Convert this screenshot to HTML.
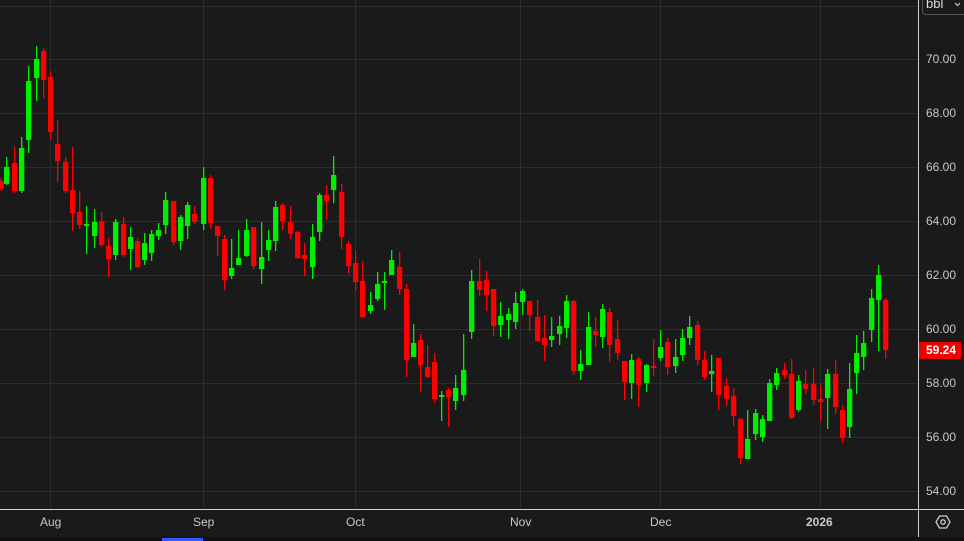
<!DOCTYPE html>
<html><head><meta charset="utf-8"><style>
html,body{margin:0;padding:0;background:#1a1a1a;width:964px;height:541px;overflow:hidden;font-family:"Liberation Sans",sans-serif}
.lbl{position:absolute;color:#c9c9c9;font-size:12px}
</style></head><body>
<svg id="c" width="964" height="541" style="position:absolute;left:0;top:0" xmlns="http://www.w3.org/2000/svg">
<rect width="964" height="541" fill="#1a1a1a"/>
<g stroke="#2d2d2d" stroke-width="1">
<line x1="0" y1="59.5" x2="918" y2="59.5"/><line x1="0" y1="113.5" x2="918" y2="113.5"/>
<line x1="0" y1="167.5" x2="918" y2="167.5"/><line x1="0" y1="221.5" x2="918" y2="221.5"/>
<line x1="0" y1="275.5" x2="918" y2="275.5"/><line x1="0" y1="329.5" x2="918" y2="329.5"/>
<line x1="0" y1="383.5" x2="918" y2="383.5"/><line x1="0" y1="437.5" x2="918" y2="437.5"/>
<line x1="0" y1="491.5" x2="918" y2="491.5"/><line x1="0" y1="6.5" x2="918" y2="6.5"/>
<line x1="50.5" y1="0" x2="50.5" y2="509"/><line x1="203.5" y1="0" x2="203.5" y2="509"/>
<line x1="355.5" y1="0" x2="355.5" y2="509"/><line x1="520.5" y1="0" x2="520.5" y2="509"/>
<line x1="660.5" y1="0" x2="660.5" y2="509"/><line x1="820.5" y1="0" x2="820.5" y2="509"/>
</g>
<g id="cs"></g>
<line x1="918.5" y1="0" x2="918.5" y2="537" stroke="#d0d0d0"/>
<line x1="0" y1="509.5" x2="964" y2="509.5" stroke="#d0d0d0"/>
<rect x="0" y="537" width="964" height="4" fill="#111"/>
<rect x="162" y="538" width="41" height="3" fill="#2a5cff"/>
<rect x="919" y="342" width="42" height="17" fill="#f20000"/>
<rect x="922.5" y="-3.5" width="45" height="18" rx="3" fill="none" stroke="#555"/>
<polygon points="939.5,516 946.5,516 950,522 946.5,528 939.5,528 936,522" fill="none" stroke="#ccc" stroke-width="1.3"/>
<circle cx="943" cy="522" r="2.2" fill="none" stroke="#ccc" stroke-width="1.3"/>
<polyline points="955,3 957.5,5.5 960,3" fill="none" stroke="#ccc" stroke-width="1.2"/>
</svg>
<div class="lbl" style="left:926px;top:-4px;color:#ddd;font-size:13px">bbl</div>
<div class="lbl" style="left:926px;top:52px">70.00</div>
<div class="lbl" style="left:926px;top:106px">68.00</div>
<div class="lbl" style="left:926px;top:160px">66.00</div>
<div class="lbl" style="left:926px;top:214px">64.00</div>
<div class="lbl" style="left:926px;top:268px">62.00</div>
<div class="lbl" style="left:926px;top:322px">60.00</div>
<div class="lbl" style="left:926px;top:376px">58.00</div>
<div class="lbl" style="left:926px;top:430px">56.00</div>
<div class="lbl" style="left:926px;top:484px">54.00</div>
<div class="lbl" style="left:926px;top:343px;color:#fff;font-weight:bold">59.24</div>
<div class="lbl" style="left:40px;top:515px">Aug</div>
<div class="lbl" style="left:193px;top:515px">Sep</div>
<div class="lbl" style="left:346px;top:515px">Oct</div>
<div class="lbl" style="left:510px;top:515px">Nov</div>
<div class="lbl" style="left:650px;top:515px">Dec</div>
<div class="lbl" style="left:806px;top:515px;font-weight:bold">2026</div>
<script>
var d=`R 1,178,191,181,189
G 6.5,157,185,167,184
R 14.5,147,193,163,191
G 21.5,137,193,148,191
G 28.5,66,153,81,140
G 36.5,46,101,59,78
R 43.5,48,98,51,80
R 50.5,71,139,77,132
R 57.5,120,182,144,161
R 65.5,157,193,162,191
R 72.5,147,231,190,213
R 79.5,191,229,212,225
G 86.5,206,254,224,226
G 94.5,209,248,222,236
R 101.5,212,247,221,245
R 108.5,238,277,246,259
G 115.5,219,260,222,255
R 123.5,217,257,224,255
G 130.5,227,270,237,249
R 137.5,238,268,241,267
G 144.5,233,265,243,260
G 151.5,230,261,234,253
G 158.5,223,240,230,236
G 165.5,192,234,200,225
R 173.5,201,245,201,242
G 180.5,215,250,217,241
G 187.5,202,239,205,226
R 194.5,206,224,214,222
G 203.5,167,230,178,224
R 210.5,175,229,178,223
R 217.5,226,256,226,236
R 224.5,235,290,239,280
G 231.5,239,279,268,276
G 238.5,230,265,258,265
G 246.5,219,257,230,256
R 253.5,227,269,227,266
G 261.5,222,284,257,269
G 268.5,230,261,240,250
G 275.5,201,251,207,241
R 282.5,203,230,205,221
R 290.5,206,239,222,234
R 297.5,231,259,232,258
R 304.5,243,276,255,259
G 312.5,224,279,237,267
G 319.5,193,241,195,232
R 326.5,185,220,195,201
G 333.5,156,203,175,190
R 341.5,184,249,192,237
R 348.5,241,274,244,266
R 355.5,251,291,263,282
R 362.5,261,318,281,317
G 370.5,292,314,305,311
G 377.5,272,301,284,299
G 384.5,272,310,281,283
G 391.5,250,275,260,275
R 399.5,252,295,267,289
R 406.5,284,377,289,360
G 413.5,324,357,343,357
R 420.5,334,392,340,365
R 427.5,345,378,367,377
R 434.5,353,403,362,399
G 441.5,391,421,395,397
R 448.5,388,427,390,397
G 455.5,375,410,388,401
G 463.5,334,401,370,395
G 471.5,270,339,281,332
R 479.5,259,296,281,290
R 486.5,271,311,280,295
R 493.5,289,336,289,326
G 500.5,302,337,316,325
G 508.5,308,339,314,320
G 515.5,292,329,303,322
G 522.5,289,315,291,302
R 529.5,301,331,301,315
R 537.5,300,342,317,341
R 544.5,315,361,338,345
G 551.5,317,347,336,340
G 559.5,316,345,326,334
G 566.5,295,338,301,328
R 573.5,300,375,301,371
G 580.5,350,380,364,371
G 588.5,312,365,327,365
R 595.5,317,347,331,335
G 602.5,304,348,309,337
R 609.5,308,362,312,345
R 617.5,320,360,339,353
R 624.5,361,400,361,382
G 631.5,354,399,360,383
R 638.5,357,407,359,385
G 646.5,364,392,365,383
R 653.5,339,376,366,368
G 660.5,330,361,347,358
R 667.5,338,375,342,367
G 675.5,339,373,357,366
G 682.5,329,361,338,355
G 689.5,316,345,327,338
R 697.5,321,365,325,360
R 704.5,351,380,360,377
G 711.5,355,392,371,374
R 718.5,358,410,358,395
R 726.5,378,406,386,399
R 733.5,388,426,396,416
R 740.5,418,464,419,458
G 747.5,410,459,439,459
G 755.5,409,440,413,434
G 762.5,415,442,419,437
G 769.5,379,421,383,421
G 776.5,368,390,373,385
R 784.5,363,379,370,375
R 791.5,359,419,374,418
G 798.5,375,412,381,410
R 805.5,370,394,384,389
R 813.5,368,405,384,400
R 820.5,385,421,399,402
G 827.5,369,429,374,398
R 835.5,360,414,374,407
R 842.5,405,443,410,438
G 849.5,363,438,389,427
G 856.5,335,394,353,373
G 863.5,331,370,343,357
G 871.5,289,342,298,330
G 878.5,265,351,275,300
R 885.5,298,359,300,350`;
var s='';d.split('\n').forEach(function(l){var c=l[0]=='G'?'#00ee00':'#ff0000';var v=l.slice(2).split(',').map(Number);var x=v[0];
s+='<rect x="'+(x-0.5)+'" y="'+v[1]+'" width="1.3" height="'+(v[2]-v[1])+'" fill="'+c+'"/>';
s+='<rect x="'+(x-2.5)+'" y="'+v[3]+'" width="5.3" height="'+Math.max(v[4]-v[3],1.5)+'" fill="'+c+'"/>';});
document.getElementById('cs').innerHTML=s;
</script>
</body></html>
